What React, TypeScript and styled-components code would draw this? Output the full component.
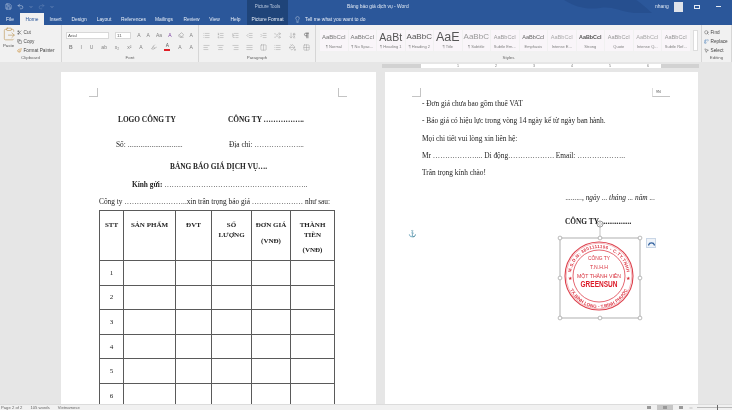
import React from "react";
import styled, { createGlobalStyle } from "styled-components";
import {
  Save, Undo2, Redo2, ChevronDown, Lightbulb, Scissors, Copy, Paintbrush, ClipboardPaste,
  Search, Replace, MousePointer2, Minus, Pilcrow, ArrowDownAZ, AlignLeft, AlignCenter, AlignRight,
  AlignJustify, List, ListOrdered, ListTree, IndentDecrease, IndentIncrease, Columns2, PaintBucket, Grid2x2,
  Highlighter, Eraser, Shuffle,
} from "lucide-react";

const GlobalStyle = createGlobalStyle`
  html, body { margin: 0; padding: 0; background: #e6e6e6; }
  body { font-family: "Liberation Sans", Arial, sans-serif; }
`;

const Shell = styled.div`
  width: 732px;
  height: 410px;
  display: flex;
  flex-direction: column;
  overflow: hidden;
  filter: blur(0.35px);
`;

const TitleBar = styled.div`
  height: 13px;
  background: #2b579a;
  color: #e4ebf5;
  font-size: 4.9px;
  display: flex;
  align-items: center;
  padding-left: 5px;
  position: relative;
`;

const TitleArt = styled.svg`
  position: absolute;
  left: 560px;
  top: 0;
`;

const QuickIcons = styled.div`
  display: flex;
  align-items: center;
  gap: 5px;
  width: 242px;
`;

const ToolsLabel = styled.div`
  width: 41px;
  height: 13px;
  background: #1f4479;
  display: flex;
  align-items: center;
  justify-content: center;
  color: #b9c8de;
  font-size: 4.5px;
`;

const DocTitle = styled.div`
  margin-left: 59px;
  width: 308px;
`;

const UserName = styled.span`
  width: 19px;
  position: relative;
`;

const Avatar = styled.div`
  width: 9px;
  height: 10px;
  background: #dfe3ea;
  margin-right: 11px;
  position: relative;
`;

const DisplayIcon = styled.div`
  width: 6px;
  height: 4px;
  border: 1px solid #e4ebf5;
  box-sizing: border-box;
  margin-right: 16px;
  position: relative;
`;

const MinIcon = styled.div`
  width: 5px;
  height: 1px;
  background: #e4ebf5;
  position: relative;
`;

const TabBar = styled.div`
  height: 12px;
  background: #2b579a;
  display: flex;
  align-items: stretch;
  color: #e8eef7;
  font-size: 4.9px;
`;

const Tab = styled.div<{ $active?: boolean; $tools?: boolean; $width: number }>`
  width: ${(p) => p.$width}px;
  flex: none;
  display: flex;
  align-items: center;
  justify-content: center;
  background: ${(p) => (p.$active ? "#f1f1f1" : p.$tools ? "#1f4479" : "transparent")};
  color: ${(p) => (p.$active ? "#2b579a" : "#e8eef7")};
`;

const TellMe = styled.div`
  display: flex;
  align-items: center;
  gap: 4px;
  margin-left: 6px;
`;

const Ribbon = styled.div`
  height: 37px;
  background: #f1f1f1;
  display: flex;
  box-sizing: border-box;
`;

const Group = styled.div<{ $width: number }>`
  width: ${(p) => p.$width}px;
  flex: none;
  box-sizing: border-box;
  border-right: 1px solid #d6d6d6;
  display: flex;
  flex-direction: column;
  padding-top: 1px;
`;

const GroupBody = styled.div`
  flex: 1;
  display: flex;
  min-height: 0;
`;

const GroupLabel = styled.div`
  height: 8px;
  line-height: 8px;
  text-align: center;
  font-size: 4.4px;
  color: #666;
`;

const PasteButton = styled.div`
  width: 17px;
  display: flex;
  flex-direction: column;
  align-items: center;
  font-size: 4.4px;
  color: #555;
  gap: 2px;
  padding-top: 1px;
`;

const SmallStack = styled.div<{ $pad?: number }>`
  display: flex;
  flex-direction: column;
  gap: 3.4px;
  font-size: 4.7px;
  color: #444;
  padding: 3px 0 0 ${(p) => p.$pad || 0}px;
`;

const SmallAction = styled.div`
  display: flex;
  align-items: center;
  gap: 1.5px;
  height: 6px;
  white-space: nowrap;
`;

const ToolGrid = styled.div`
  flex: 1;
  display: flex;
  flex-direction: column;
  gap: 4px;
  padding: 5px 5px 0 4px;
`;

const ToolRow = styled.div<{ $inset?: number }>`
  display: flex;
  align-items: center;
  justify-content: space-between;
  height: 8px;
  color: #8a8a8a;
  font-size: 5px;
  padding-left: ${(p) => p.$inset || 0}px;
`;

const FontBox = styled.div<{ $width: number }>`
  width: ${(p) => p.$width}px;
  height: 7px;
  background: #fff;
  border: 1px solid #d8d8d8;
  box-sizing: border-box;
  font-size: 4.4px;
  line-height: 5px;
  padding-left: 1px;
  color: #555;
`;

const Glyph = styled.span<{ $color?: string; $weight?: number }>`
  color: ${(p) => p.$color || "#808080"};
  font-weight: ${(p) => p.$weight || 400};
  font-size: 5px;
`;

const RedBar = styled.span`
  display: inline-block;
  width: 6px;
  height: 6px;
  border-bottom: 2px solid #e01f26;
  font-size: 4.8px;
  line-height: 6px;
  text-align: center;
  color: #555;
`;

const Gallery = styled.div`
  display: flex;
  gap: 1px;
  padding: 4px 0 0 4px;
`;

const StyleCard = styled.div`
  width: 27.5px;
  height: 21px;
  flex: none;
  background: #f9f5f9;
  display: flex;
  flex-direction: column;
  align-items: center;
  overflow: hidden;
  white-space: nowrap;
`;

const StyleSample = styled.div<{ $size: number; $color: string; $bold?: boolean }>`
  height: 14px;
  line-height: 14px;
  font-size: ${(p) => p.$size}px;
  color: ${(p) => p.$color};
  font-weight: ${(p) => (p.$bold ? 700 : 400)};
`;

const StyleName = styled.div`
  font-size: 4px;
  line-height: 6px;
  color: #808080;
`;

const Spinner = styled.div`
  width: 5px;
  margin-left: 2px;
  height: 21px;
  background: #fff;
  border: 1px solid #ddd;
  box-sizing: border-box;
  flex: none;
`;

const RulerBar = styled.div`
  height: 8px;
  background: #e6e6e6;
  display: flex;
  align-items: center;
  padding-left: 382px;
  flex: none;
`;

const Ruler = styled.div`
  width: 317px;
  height: 4px;
  display: flex;
  background: #fff;
  align-items: center;
  color: #777;
  font-size: 3.6px;
`;

const RulerMargin = styled.div<{ $width: number }>`
  width: ${(p) => p.$width}px;
  height: 4px;
  flex: none;
  background: #d2d2d2;
`;

const RulerTicks = styled.div`
  flex: 1;
  display: flex;
`;

const RulerNumber = styled.span`
  width: 38px;
  text-align: right;
  flex: none;
`;

const Workspace = styled.div`
  flex: 1;
  min-height: 0;
  background: #e6e6e6;
  display: flex;
  gap: 9px;
  padding: 2px 0 0 61px;
  overflow: hidden;
`;

const Page = styled.div<{ $width: number }>`
  width: ${(p) => p.$width}px;
  flex: none;
  background: #fff;
  position: relative;
  box-sizing: border-box;
  font-family: "Liberation Serif", "Times New Roman", serif;
  font-size: 7.35px;
  color: #222;
`;

const FirstPageBody = styled.div`
  padding: 43px 0 0 38px;
`;

const SecondPageBody = styled.div`
  padding: 27px 0 0 37px;
`;

const CropMark = styled.div<{ $left: number; $top: number; $right?: boolean }>`
  position: absolute;
  left: ${(p) => p.$left}px;
  top: ${(p) => p.$top}px;
  width: 9px;
  height: 9px;
  box-sizing: border-box;
  border-bottom: 1px solid #c4c4c4;
  ${(p) => (p.$right ? "border-left: 1px solid #c4c4c4;" : "border-right: 1px solid #c4c4c4;")}
`;

const Columns = styled.div<{ $pad: number; $col: number; $mb: number; $bold?: boolean }>`
  display: grid;
  grid-template-columns: ${(p) => p.$col}px auto;
  padding-left: ${(p) => p.$pad}px;
  margin-bottom: ${(p) => p.$mb}px;
  height: 9px;
  line-height: 9px;
  font-weight: ${(p) => (p.$bold ? 700 : 400)};
  white-space: nowrap;
`;

const Line = styled.div<{ $pad?: number; $mb: number; $bold?: boolean; $italic?: boolean; $align?: string; $end?: number }>`
  height: 9px;
  line-height: 9px;
  white-space: nowrap;
  padding-left: ${(p) => p.$pad || 0}px;
  padding-right: ${(p) => p.$end || 0}px;
  margin-bottom: ${(p) => p.$mb}px;
  font-weight: ${(p) => (p.$bold ? 700 : 400)};
  font-style: ${(p) => (p.$italic ? "italic" : "normal")};
  text-align: ${(p) => p.$align || "left"};
`;

const QuoteTable = styled.table`
  border-collapse: collapse;
  table-layout: fixed;
  width: 235px;
  margin-top: 4px;
  font-size: 7px;

  td, th {
    border: 1px solid #5a5a5a;
    padding: 0;
    text-align: center;
  }
  th {
    height: 50px;
    vertical-align: top;
    font-weight: 700;
    line-height: 9.5px;
    padding-top: 10px;
    box-sizing: border-box;
  }
  td {
    height: 24.6px;
    box-sizing: border-box;
  }
`;

const Spread = styled.p`
  margin: 6px 0 0;
`;

const StampWrap = styled.div`
  position: absolute;
  left: 165px;
  top: 156px;
  width: 100px;
  height: 100px;
`;

const LayoutButton = styled.div`
  position: absolute;
  left: 261px;
  top: 166px;
  width: 10px;
  height: 10px;
  background: #eef3f9;
  border: 1px solid #c9d6e6;
  box-sizing: border-box;
  display: flex;
  align-items: center;
  justify-content: center;
`;

const PageTag = styled.div`
  position: absolute;
  left: 267px;
  top: 16px;
  width: 18px;
  height: 9px;
  border-bottom: 1px solid #c4c4c4;
  border-left: 1px solid #ddd;
  font-size: 3.8px;
  line-height: 9px;
  padding-left: 3px;
  box-sizing: border-box;
  color: #555;
  font-family: "Liberation Sans", sans-serif;
`;

const Anchor = styled.div`
  position: absolute;
  left: 23px;
  top: 158px;
  color: #5b8ac7;
  font-size: 7px;
  line-height: 9px;
`;

const StatusBar = styled.div`
  height: 6px;
  flex: none;
  background: #f1f1f1;
  border-top: 1px solid #dcdcdc;
  box-sizing: border-box;
  display: flex;
  align-items: center;
  gap: 8px;
  padding-left: 1px;
  font-size: 4.2px;
  line-height: 5px;
  color: #666;
`;

const StatusRight = styled.div`
  margin-left: auto;
  display: flex;
  align-items: center;
  gap: 4px;
`;

const ViewButton = styled.div<{ $active?: boolean }>`
  width: ${(p) => (p.$active ? 16 : 8)}px;
  height: 5px;
  background: ${(p) => (p.$active ? "#c6c6c6" : "transparent")};
  display: flex;
  align-items: center;
  justify-content: center;
  &::after {
    content: "";
    width: 4px;
    height: 3px;
    background: #999;
  }
`;

const ZoomTrack = styled.div`
  width: 35px;
  height: 1px;
  background: #bbb;
  position: relative;
  &::after {
    content: "";
    position: absolute;
    left: 20px;
    top: -2px;
    width: 1px;
    height: 5px;
    background: #666;
  }
`;

const tabs: [string, number][] = [
  ["File", 20], ["Home", 24], ["Insert", 23], ["Design", 24], ["Layout", 26], ["References", 33],
  ["Mailings", 28], ["Review", 27], ["View", 19], ["Help", 23],
];

const styleCards: [string, string, number, string, boolean?][] = [
  ["AaBbCcI", "¶ Normal", 6, "#777"],
  ["AaBbCcI", "¶ No Spac...", 6, "#777"],
  ["AaBt", "¶ Heading 1", 10.5, "#555"],
  ["AaBbC", "¶ Heading 2", 8, "#555"],
  ["AaE", "¶ Title", 12.5, "#555"],
  ["AaBbC", "¶ Subtitle", 8, "#999"],
  ["AaBbCcI", "Subtle Em...", 5.6, "#999"],
  ["AaBbCcI", "Emphasis", 5.6, "#666"],
  ["AaBbCcI", "Intense E...", 5.6, "#aaa"],
  ["AaBbCcI", "Strong", 5.4, "#555", true],
  ["AaBbCcI", "Quote", 5.6, "#999"],
  ["AaBbCcI", "Intense Q...", 5.6, "#aaa"],
  ["AaBbCcI", "Subtle Ref...", 5.6, "#999"],
];

const columns = [24, 52, 36, 40, 39, 44];
const handles = [[10, 10], [50, 10], [90, 10], [10, 50], [90, 50], [10, 90], [50, 90], [90, 90]];

const Stamp: React.FC = () => (
  <svg width="100" height="100" viewBox="0 0 100 100" overflow="visible" fontFamily="Liberation Sans, sans-serif">
    <defs>
      <path id="stampTop" d="M 21 48 A 28 28 0 0 1 77 48" />
      <path id="stampBottom" d="M 17 48 A 32 32 0 0 0 81 48" />
    </defs>
    <rect x="10" y="10" width="80" height="80" fill="none" stroke="#bdbdbd" strokeWidth="1.2" />
    <line x1="50" y1="-1" x2="50" y2="10" stroke="#9a9a9a" strokeWidth="0.6" />
    <circle cx="49" cy="48" r="34" fill="none" stroke="#dd3f4b" strokeWidth="1.1" />
    <circle cx="49" cy="48" r="32.8" fill="none" stroke="#e25560" strokeWidth="0.4" />
    <circle cx="49" cy="48" r="26" fill="none" stroke="#dd3f4b" strokeWidth="0.8" />
    <text fontSize="4.5" fontWeight="700" fill="#dc3a47" letterSpacing="0.3">
      <textPath href="#stampTop" startOffset="50%" textAnchor="middle">M.S.D.N: 3801111106 - C.TY.TNHH</textPath>
    </text>
    <text fontSize="4.5" fontWeight="700" fill="#dc3a47" letterSpacing="0.1">
      <textPath href="#stampBottom" startOffset="50%" textAnchor="middle">TX.BÌNH LONG - T.BÌNH PHƯỚC</textPath>
    </text>
    <text x="49" y="32" fontSize="6" fill="#d8303c" textAnchor="middle" textLength="22" lengthAdjust="spacingAndGlyphs">CÔNG TY</text>
    <text x="49" y="41" fontSize="5.6" fill="#d8303c" textAnchor="middle" textLength="18" lengthAdjust="spacingAndGlyphs">T.N.H.H</text>
    <text x="49" y="49.5" fontSize="5.8" fill="#d8303c" textAnchor="middle" textLength="44" lengthAdjust="spacingAndGlyphs">MỘT THÀNH VIÊN</text>
    <text x="49" y="59" fontSize="8.4" fontWeight="700" fill="#dc1a28" textAnchor="middle" textLength="37" lengthAdjust="spacingAndGlyphs">GREENSUN</text>
    <text x="20" y="52" fontSize="4.5" fill="#d8303c" textAnchor="middle">★</text>
    <text x="78" y="52" fontSize="4.5" fill="#d8303c" textAnchor="middle">★</text>
    {handles.map(([x, y]) => (
      <circle key={`${x}-${y}`} cx={x} cy={y} r="1.9" fill="#fff" stroke="#8e8e8e" strokeWidth="0.6" />
    ))}
    <circle cx="50" cy="-4" r="3" fill="#fff" stroke="#8e8e8e" strokeWidth="0.9" />
    <circle cx="50" cy="-4" r="1.4" fill="none" stroke="#8e8e8e" strokeWidth="0.5" />
  </svg>
);

const App: React.FC = () => {
  const t = { size: 7, strokeWidth: 1.3 };
  return (
    <Shell>
      <GlobalStyle />
      <TitleBar>
        <TitleArt width="100" height="13" viewBox="0 0 100 13">
          <path d="M4 0 C16 7 26 10 40 8 C52 6 58 11 74 13 L92 13 C84 6 80 2 76 0 Z" fill="#264f8f" />
        </TitleArt>
        <QuickIcons>
          <Save size={7} strokeWidth={1.5} />
          <Undo2 size={7} strokeWidth={1.5} />
          <ChevronDown size={4} />
          <Redo2 size={7} strokeWidth={1.5} opacity={0.35} />
          <ChevronDown size={4} />
        </QuickIcons>
        <ToolsLabel>Picture Tools</ToolsLabel>
        <DocTitle>Bảng báo giá dịch vụ  -  Word</DocTitle>
        <UserName>nhang</UserName>
        <Avatar />
        <DisplayIcon />
        <MinIcon />
      </TitleBar>
      <TabBar>
        {tabs.map(([name, width]) => (
          <Tab key={name} $width={width} $active={name === "Home"}>{name}</Tab>
        ))}
        <Tab $width={41} $tools>Picture Format</Tab>
        <TellMe>
          <Lightbulb size={7} strokeWidth={1.3} />
          Tell me what you want to do
        </TellMe>
      </TabBar>
      <Ribbon>
        <Group $width={62}>
          <GroupBody>
            <PasteButton>
              <ClipboardPaste size={14} strokeWidth={1} color="#b98f4a" />
              Paste
            </PasteButton>
            <SmallStack>
              <SmallAction><Scissors size={5} />Cut</SmallAction>
              <SmallAction><Copy size={5} />Copy</SmallAction>
              <SmallAction><Paintbrush size={5} color="#c98a2d" />Format Painter</SmallAction>
            </SmallStack>
          </GroupBody>
          <GroupLabel>Clipboard</GroupLabel>
        </Group>
        <Group $width={137}>
          <GroupBody>
            <ToolGrid>
              <ToolRow>
                <FontBox $width={43}>Arial</FontBox>
                <FontBox $width={16}>11</FontBox>
                <Glyph>A</Glyph><Glyph>A</Glyph><Glyph>Aa</Glyph>
                <Glyph $color="#7a3fa0">A</Glyph>
                <Eraser size={6} />
                <Glyph>A</Glyph>
              </ToolRow>
              <ToolRow $inset={3}>
                <Glyph $weight={700}>B</Glyph>
                <Glyph>I</Glyph>
                <Glyph>U</Glyph>
                <Glyph>ab</Glyph>
                <Glyph>x₂</Glyph>
                <Glyph>x²</Glyph>
                <Glyph>A</Glyph>
                <Highlighter size={6} />
                <RedBar>A</RedBar>
                <Glyph>A</Glyph>
                <Glyph>A</Glyph>
              </ToolRow>
            </ToolGrid>
          </GroupBody>
          <GroupLabel>Font</GroupLabel>
        </Group>
        <Group $width={117}>
          <GroupBody>
            <ToolGrid>
              <ToolRow>
                <List {...t} /><ListOrdered {...t} /><ListTree {...t} />
                <IndentDecrease {...t} /><IndentIncrease {...t} />
                <Shuffle {...t} /><ArrowDownAZ {...t} /><Pilcrow size={7} strokeWidth={2} color="#555" />
              </ToolRow>
              <ToolRow>
                <AlignLeft {...t} /><AlignCenter {...t} /><AlignRight {...t} /><AlignJustify {...t} />
                <Columns2 {...t} /><List {...t} /><PaintBucket {...t} /><Grid2x2 {...t} />
              </ToolRow>
            </ToolGrid>
          </GroupBody>
          <GroupLabel>Paragraph</GroupLabel>
        </Group>
        <Group $width={386}>
          <GroupBody>
            <Gallery>
              {styleCards.map(([sample, name, size, color, bold]) => (
                <StyleCard key={name}>
                  <StyleSample $size={size} $color={color} $bold={bold}>{sample}</StyleSample>
                  <StyleName>{name}</StyleName>
                </StyleCard>
              ))}
              <Spinner />
            </Gallery>
          </GroupBody>
          <GroupLabel>Styles</GroupLabel>
        </Group>
        <Group $width={30}>
          <GroupBody>
            <SmallStack $pad={2}>
              <SmallAction><Search size={5} />Find</SmallAction>
              <SmallAction><Replace size={5} color="#4a7ebb" />Replace</SmallAction>
              <SmallAction><MousePointer2 size={5} />Select</SmallAction>
            </SmallStack>
          </GroupBody>
          <GroupLabel>Editing</GroupLabel>
        </Group>
      </Ribbon>
      <RulerBar>
        <Ruler>
          <RulerMargin $width={39} />
          <RulerTicks>
            {[1, 2, 3, 4, 5, 6].map((n) => <RulerNumber key={n}>{n}</RulerNumber>)}
          </RulerTicks>
          <RulerMargin $width={38} />
        </Ruler>
      </RulerBar>
      <Workspace>
        <Page $width={315}>
          <CropMark $left={28} $top={16} />
          <CropMark $left={277} $top={16} $right />
          <FirstPageBody>
            <Columns $pad={19} $col={110} $mb={16} $bold>
              <span>LOGO CÔNG TY</span>
              <span>CÔNG TY ……………..</span>
            </Columns>
            <Columns $pad={17} $col={113} $mb={13}>
              <span>Số: ..............................</span>
              <span>Địa chỉ: ………………...</span>
            </Columns>
            <Line $pad={71} $mb={9} $bold>BẢNG BÁO GIÁ DỊCH VỤ….</Line>
            <Line $pad={33} $mb={8}>
              <strong>Kính gửi:</strong> …………………………………………………..
            </Line>
            <Line $mb={0}>Công ty ……………………..xin trân trọng báo giá ………………… như sau:</Line>
            <QuoteTable>
              <colgroup>
                {columns.map((w, i) => <col key={i} width={w} />)}
              </colgroup>
              <thead>
                <tr>
                  <th>STT</th>
                  <th>SẢN PHẨM</th>
                  <th>ĐVT</th>
                  <th>SỐ<br />LƯỢNG</th>
                  <th>ĐƠN GIÁ<Spread>(VNĐ)</Spread></th>
                  <th>THÀNH<br />TIỀN<Spread>(VNĐ)</Spread></th>
                </tr>
              </thead>
              <tbody>
                {[1, 2, 3, 4, 5, 6].map((n) => (
                  <tr key={n}>
                    <td>{n}</td>
                    <td /><td /><td /><td /><td />
                  </tr>
                ))}
              </tbody>
            </QuoteTable>
          </FirstPageBody>
        </Page>
        <Page $width={313}>
          <CropMark $left={27} $top={16} />
          <PageTag>9N</PageTag>
          <Anchor>⚓</Anchor>
          <SecondPageBody>
            <Line $mb={8.35}>- Đơn giá chưa bao gồm thuế VAT</Line>
            <Line $mb={8.35}>- Báo giá có hiệu lực trong vòng 14 ngày kể từ ngày ban hành.</Line>
            <Line $mb={8.35}>Mọi chi tiết vui lòng xin liên hệ:</Line>
            <Line $mb={8.35}>Mr ………………... Di động………………. Email: ………………..</Line>
            <Line $mb={15.5}>Trân trọng kính chào!</Line>
            <Line $mb={15.5} $italic $align="right" $end={43}>........., ngày ... tháng ... năm ...</Line>
            <Line $pad={143} $mb={0} $bold>CÔNG TY..................</Line>
          </SecondPageBody>
          <StampWrap><Stamp /></StampWrap>
          <LayoutButton>
            <svg width="7" height="5" viewBox="0 0 7 5">
              <path d="M0.5 4.5 C1 1 6 1 6.5 4.5" fill="none" stroke="#2f5f9e" strokeWidth="1.3" />
            </svg>
          </LayoutButton>
        </Page>
      </Workspace>
      <StatusBar>
        <span>Page 2 of 2</span>
        <span>105 words</span>
        <span>Vietnamese</span>
        <StatusRight>
          <ViewButton />
          <ViewButton $active />
          <ViewButton />
          <Minus size={4} />
          <ZoomTrack />
        </StatusRight>
      </StatusBar>
    </Shell>
  );
};

export default App;
